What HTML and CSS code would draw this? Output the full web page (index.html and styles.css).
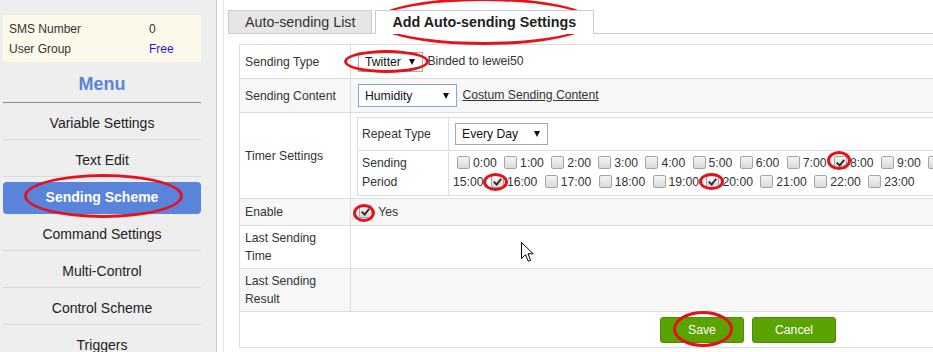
FILE: index.html
```html
<!DOCTYPE html>
<html lang="en">
<head>
<meta charset="utf-8">
<title>Add Auto-sending Settings</title>
<link rel="stylesheet" href="styles.css">
</head>
<body>
<div class="page">
  <aside class="sidebar">
    <div class="info">
      <div class="info-row"><span class="info-key">SMS Number</span><span>0</span></div>
      <div class="info-row"><span class="info-key">User Group</span><span class="free">Free</span></div>
    </div>
    <h2 class="menu-title">Menu</h2>
    <ul class="menu">
      <li class="menu-item">Variable Settings</li>
      <li class="menu-item">Text Edit</li>
      <li class="menu-item active">Sending Scheme</li>
      <li class="menu-item">Command Settings</li>
      <li class="menu-item">Multi-Control</li>
      <li class="menu-item">Control Scheme</li>
      <li class="menu-item">Triggers</li>
    </ul>
  </aside>
  <main class="main">
    <div class="tab-area">
      <div class="tabs">
        <div class="tab">Auto-sending List</div>
        <div class="tab active">Add Auto-sending Settings</div>
      </div>
      <div class="panel">
        <div class="form">
          <div class="lbl">Sending Type</div>
          <div class="val"><span class="line"><span class="sel sel-type">Twitter<i class="arrow"></i></span> Binded to lewei50</span></div>

          <div class="lbl alt">Sending Content</div>
          <div class="val alt"><span class="line"><span class="sel sel-content">Humidity<i class="arrow"></i></span> <a class="link" href="#">Costum Sending Content</a></span></div>

          <div class="lbl">Timer Settings</div>
          <div class="val timer">
            <div class="inner">
              <div class="ilbl">Repeat Type</div>
              <div class="ival"><span class="sel sel-repeat">Every Day<i class="arrow"></i></span></div>
              <div class="ilbl period-lbl">Sending<br>Period</div>
              <div class="ival period"><div class="hours"><input type="checkbox" class="cb">0:00 <input type="checkbox" class="cb">1:00 <input type="checkbox" class="cb">2:00 <input type="checkbox" class="cb">3:00 <input type="checkbox" class="cb">4:00 <input type="checkbox" class="cb">5:00 <input type="checkbox" class="cb">6:00 <input type="checkbox" class="cb">7:00 <input type="checkbox" class="cb" checked>8:00 <input type="checkbox" class="cb">9:00 <input type="checkbox" class="cb">10:00 <input type="checkbox" class="cb">11:00 <input type="checkbox" class="cb">12:00 <input type="checkbox" class="cb">13:00 <input type="checkbox" class="cb">14:00 <input type="checkbox" class="cb"></div><div class="hours">15:00 <input type="checkbox" class="cb" checked>16:00 <input type="checkbox" class="cb">17:00 <input type="checkbox" class="cb">18:00 <input type="checkbox" class="cb">19:00 <input type="checkbox" class="cb" checked>20:00 <input type="checkbox" class="cb">21:00 <input type="checkbox" class="cb">22:00 <input type="checkbox" class="cb">23:00</div></div>
            </div>
          </div>

          <div class="lbl alt">Enable</div>
          <div class="val alt"><span class="line"><input type="checkbox" class="cb cb-enable" checked> Yes</span></div>

          <div class="lbl two">Last Sending<br>Time</div>
          <div class="val"></div>

          <div class="lbl alt two">Last Sending<br>Result</div>
          <div class="val alt"></div>

          <div class="actions">
            <button class="btn" type="button">Save</button>
            <button class="btn" type="button">Cancel</button>
          </div>
        </div>
      </div>
    </div>
  </main>
</div>

<div class="ring ring-scheme"></div>
<div class="ring ring-tab"></div>
<div class="ring ring-type"></div>
<div class="ring ring-8"></div>
<div class="ring ring-16"></div>
<div class="ring ring-20"></div>
<div class="ring ring-enable"></div>
<div class="ring ring-save"></div>

<svg class="cursor" width="14" height="22" viewBox="0 0 14 22">
  <path d="M0.5 0.5 L0.5 16.5 L4.5 12.7 L7.2 19.2 L9.6 18.2 L7 11.8 L12.2 11.8 Z" fill="#fff" stroke="#000" stroke-width="1" stroke-linejoin="miter"/>
</svg>
</body>
</html>
```

FILE: styles.css
```css
html, body {
  margin: 0;
  padding: 0;
}

body {
  width: 933px;
  height: 352px;
  overflow: hidden;
  position: relative;
  background: #fff;
  color: #333;
  font-family: "Liberation Sans", Arial, sans-serif;
}

.page {
  display: flex;
  height: 352px;
}

/* ---------- sidebar ---------- */
.sidebar {
  flex: none;
  width: 217px;
  box-sizing: border-box;
  background: #eeeeee;
  border-right: 1px solid #c9c9c9;
  padding: 15px 0 0 3px;
}

.info {
  width: 198px;
  height: 47px;
  box-sizing: border-box;
  padding: 4px 0 0 6px;
  background: #fdf9ea;
  font-size: 12px;
  color: #333;
}

.info-row {
  display: flex;
  height: 20px;
  line-height: 20px;
}

.info-key {
  width: 140px;
}

.free {
  color: #1c1cdf;
}

.menu-title {
  margin: 0;
  width: 198px;
  height: 41px;
  box-sizing: border-box;
  padding-top: 4px;
  line-height: 36px;
  border-bottom: 1px solid #8c8c8c;
  text-align: center;
  font-size: 18px;
  font-weight: bold;
  color: #5b84d9;
}

.menu {
  list-style: none;
  margin: 0;
  padding: 0;
  width: 198px;
}

.menu-item {
  height: 37px;
  box-sizing: border-box;
  padding-top: 4px;
  line-height: 32px;
  border-bottom: 1px solid #d9d9d9;
  text-align: center;
  font-size: 14px;
  color: #222;
}

.menu-item.active {
  margin-top: 5px;
  height: 32px;
  padding-top: 0;
  line-height: 31px;
  border-bottom: none;
  border-radius: 4px;
  background: #5a83da;
  color: #fff;
  font-weight: bold;
}

/* ---------- main ---------- */
.main {
  flex: 1;
  min-width: 0;
  padding-left: 6px;
}

.tab-area {
  height: 100%;
  box-sizing: border-box;
  border-left: 1px solid #e6e6e6;
  padding: 10px 0 0 4px;
}

.tabs {
  display: flex;
  gap: 3px;
  height: 23px;
}

.tab {
  height: 23px;
  box-sizing: border-box;
  padding: 0 16px;
  border: 1px solid #cccccc;
  border-bottom: none;
  line-height: 22px;
  font-size: 14.3px;
  background: #e6e6e6;
  color: #333;
  white-space: nowrap;
}

.tab.active {
  height: 24px;
  padding: 0 17px 0 16px;
  background: #fff;
  font-weight: bold;
  color: #222;
  position: relative;
  z-index: 1;
}

.panel {
  border-top: 1px solid #cccccc;
  padding: 10px 0 0 11px;
}

/* ---------- form grid ---------- */
.form {
  width: 1018px;
  box-sizing: border-box;
  display: grid;
  grid-template-columns: 111px 1fr;
  grid-template-rows: 34px 34px 86px 27px 43px 43px 35px;
  border: 1px solid #dddddd;
  font-size: 12.2px;
  color: #333;
}

.lbl,
.val {
  box-sizing: border-box;
  border-bottom: 1px solid #dddddd;
  display: flex;
  align-items: center;
  white-space: nowrap;
}

.lbl {
  border-right: 1px solid #dddddd;
  padding-left: 5px;
  line-height: 18px;
}

.val {
  padding-left: 6px;
}

.line {
  display: block;
}

.alt {
  background: #f7f7f7;
}

.sel {
  display: inline-flex;
  align-items: center;
  justify-content: space-between;
  vertical-align: middle;
  box-sizing: border-box;
  padding: 0 7px 0 6px;
  border: 1px solid #a9a9a9;
  background: #fff;
  color: #111;
}

.arrow {
  width: 0;
  height: 0;
  border-left: 3px solid transparent;
  border-right: 3px solid transparent;
  border-top: 6px solid #111;
}

.sel-type {
  width: 65px;
  height: 20px;
  margin: 0 1px 0 1px;
}

.sel-content {
  width: 99px;
  height: 23px;
  margin: 0 2px 0 1px;
  border-color: #7fa6d6;
}

.sel-repeat {
  width: 93px;
  height: 22px;
  margin-left: 2px;
}

.link {
  color: #333;
  text-decoration: underline;
}

/* timer */
.val.timer {
  align-items: flex-start;
  padding: 4px 6px 0 6px;
}

.inner {
  flex: 1;
  display: grid;
  grid-template-columns: 91px 1fr;
  grid-template-rows: 33px 44px;
  border: 1px solid #dddddd;
}

.ilbl,
.ival {
  box-sizing: border-box;
  border-bottom: 1px solid #dddddd;
  display: flex;
  align-items: center;
}

.ilbl {
  border-right: 1px solid #dddddd;
  padding-left: 4px;
}

.ival {
  padding-left: 4px;
}

.inner > .ilbl:nth-last-child(2),
.inner > .ival:last-child {
  border-bottom: none;
}

.period-lbl {
  line-height: 19px;
}

.ival.period {
  flex-direction: column;
  align-items: stretch;
  justify-content: center;
}

.hours {
  line-height: 19px;
  white-space: nowrap;
}

.cb {
  -webkit-appearance: none;
  appearance: none;
  width: 13px;
  height: 13px;
  box-sizing: border-box;
  margin: 0 3px 0 4px;
  vertical-align: -2px;
  border: 1px solid #a4a4a4;
  border-radius: 2px;
  background: linear-gradient(#f5f5f5, #d9d9d9);
  position: relative;
}

.cb:checked::after {
  content: "";
  position: absolute;
  left: 3px;
  top: 1px;
  width: 3px;
  height: 6px;
  border-right: 2px solid #333;
  border-bottom: 2px solid #333;
  transform: rotate(40deg);
}

.cb-enable {
  margin-left: 2px;
}

.actions {
  grid-column: 1 / -1;
  display: flex;
  justify-content: center;
  align-items: center;
  gap: 8px;
  padding-top: 1px;
}

.btn {
  width: 84px;
  height: 26px;
  box-sizing: border-box;
  border: 1px solid #4d8b00;
  border-radius: 3px;
  background: #5ba300;
  color: #fff;
  font-family: "Liberation Sans", Arial, sans-serif;
  font-size: 12.2px;
  padding: 0;
}

/* ---------- annotations (overlays) ---------- */
.ring {
  position: absolute;
  box-sizing: border-box;
  border: 3px solid #e4121b;
  border-radius: 50%;
  pointer-events: none;
}

.ring-scheme { left: 24px;  top: 174px; width: 159px; height: 44px; }
.ring-tab    { left: 375px; top: -2px;  width: 217px; height: 47px; }
.ring-type   { left: 344px; top: 50px;  width: 85px;  height: 23px; }
.ring-8      { left: 827px; top: 151px; width: 24px;  height: 19px; }
.ring-16     { left: 483px; top: 173px; width: 25px;  height: 18px; }
.ring-20     { left: 699px; top: 173px; width: 25px;  height: 17px; }
.ring-enable { left: 353px; top: 204px; width: 22px;  height: 18px; }
.ring-save   { left: 673px; top: 311px; width: 60px;  height: 36px; }

.cursor {
  position: absolute;
  left: 521px;
  top: 242px;
}
```
